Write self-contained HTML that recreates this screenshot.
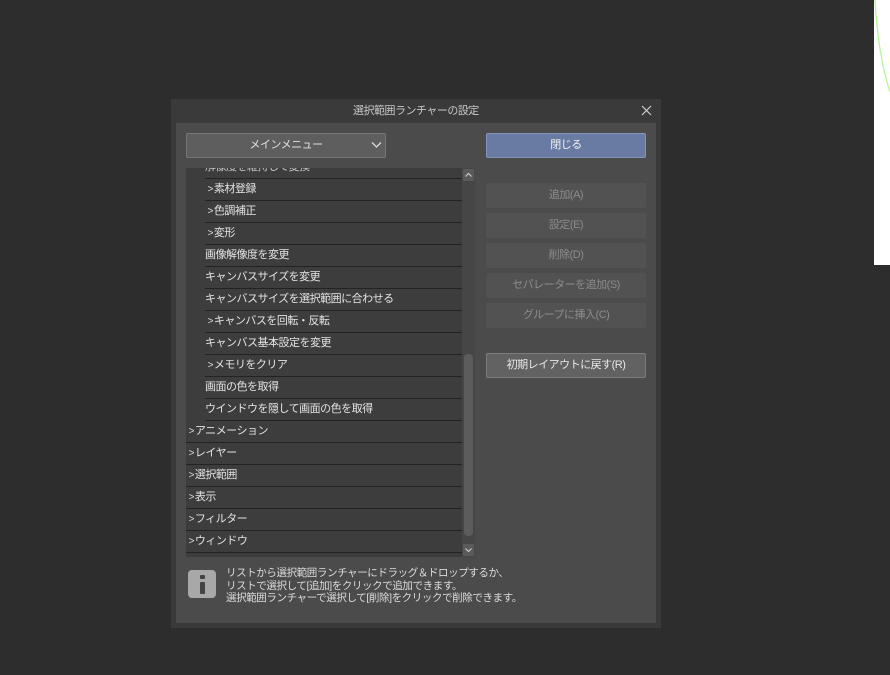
<!DOCTYPE html>
<html><head><meta charset="utf-8"><style>
*{margin:0;padding:0;box-sizing:border-box}
body{width:890px;height:675px;background:#2d2d2d;position:relative;overflow:hidden;font-family:"Liberation Sans","Noto Sans CJK JP",sans-serif;font-size:11px;letter-spacing:-0.5px;color:#e6e6e6}
.a{position:absolute}
.dlg{left:171px;top:99px;width:490px;height:529px;background:#3a3a3a}
.title{left:171px;top:99px;width:490px;height:24px;text-align:center;line-height:24px;color:#c8c8c8}
.inner{left:176px;top:123px;width:480px;height:500px;background:#4b4b4b}
.combo{left:186px;top:133px;width:200px;height:25px;background:#5e5e5e;border:1px solid #767676;border-radius:2px;text-align:center;line-height:23px;color:#e0e0e0}
.list{left:186px;top:168px;width:289px;height:389px;background:#3d3d3d;overflow:hidden}
.row{position:absolute;height:22px;line-height:21px;border-bottom:1px solid #232323;color:#e4e4e4;white-space:nowrap;width:276px}
.c{font-size:10px;margin-right:1px;color:#ddd}
.btn{left:486px;width:160px;height:25px;border-radius:2px;text-align:center;line-height:25px}
.dis{background:#525252;color:#8c8c8c}
</style></head><body>
<div class="a" style="left:874px;top:0;width:16px;height:265px;background:#fff"></div>
<svg class="a" style="left:870px;top:0" width="20" height="100"><path d="M5 0 Q8 55 20 92" stroke="#b6f59a" stroke-width="1.3" fill="none"/></svg>
<div class="a dlg"></div>
<div class="a title">選択範囲ランチャーの設定</div>
<svg class="a" style="left:641px;top:105px" width="11" height="11"><path d="M1 1 L10 10 M10 1 L1 10" stroke="#cfcfcf" stroke-width="1.2"/></svg>
<div class="a inner"></div>
<div class="a combo">メインメニュー</div>
<svg class="a" style="left:371px;top:141px" width="11" height="8"><path d="M1 1.5 L5.5 6 L10 1.5" stroke="#ddd" stroke-width="1.3" fill="none"/></svg>
<div class="a list">
<div class="row" style="left:19px;top:-11px;width:257px;color:#ccc">解像度を維持して変換</div>
<div class="row" style="left:19px;top:11px;width:257px">&nbsp;<span class="c">&gt;</span>素材登録</div>
<div class="row" style="left:19px;top:33px;width:257px">&nbsp;<span class="c">&gt;</span>色調補正</div>
<div class="row" style="left:19px;top:55px;width:257px">&nbsp;<span class="c">&gt;</span>変形</div>
<div class="row" style="left:19px;top:77px;width:257px">画像解像度を変更</div>
<div class="row" style="left:19px;top:99px;width:257px">キャンバスサイズを変更</div>
<div class="row" style="left:19px;top:121px;width:257px">キャンバスサイズを選択範囲に合わせる</div>
<div class="row" style="left:19px;top:143px;width:257px">&nbsp;<span class="c">&gt;</span>キャンバスを回転・反転</div>
<div class="row" style="left:19px;top:165px;width:257px">キャンバス基本設定を変更</div>
<div class="row" style="left:19px;top:187px;width:257px">&nbsp;<span class="c">&gt;</span>メモリをクリア</div>
<div class="row" style="left:19px;top:209px;width:257px">画面の色を取得</div>
<div class="row" style="left:19px;top:231px;width:257px">ウインドウを隠して画面の色を取得</div>
<div class="row" style="left:0;top:253px">&nbsp;<span class="c">&gt;</span>アニメーション</div>
<div class="row" style="left:0;top:275px">&nbsp;<span class="c">&gt;</span>レイヤー</div>
<div class="row" style="left:0;top:297px">&nbsp;<span class="c">&gt;</span>選択範囲</div>
<div class="row" style="left:0;top:319px">&nbsp;<span class="c">&gt;</span>表示</div>
<div class="row" style="left:0;top:341px">&nbsp;<span class="c">&gt;</span>フィルター</div>
<div class="row" style="left:0;top:363px">&nbsp;<span class="c">&gt;</span>ウィンドウ</div>
<div class="a" style="left:276px;top:0;width:13px;height:389px;background:#464646"></div>
<div class="a" style="left:277px;top:1px;width:11px;height:12px;background:#5a5a5a;border-radius:1px"></div>
<div class="a" style="left:277px;top:376px;width:11px;height:12px;background:#5a5a5a;border-radius:1px"></div>
<div class="a" style="left:278px;top:186px;width:9px;height:182px;background:#5c5c5c;border-radius:4px"></div>
<svg class="a" style="left:278px;top:3px" width="9" height="8"><path d="M1.5 5.5 L4.5 2.5 L7.5 5.5" stroke="#ccc" stroke-width="1.2" fill="none"/></svg>
<svg class="a" style="left:278px;top:378px" width="9" height="8"><path d="M1.5 2.5 L4.5 5.5 L7.5 2.5" stroke="#ccc" stroke-width="1.2" fill="none"/></svg>
</div>
<div class="a" style="left:188px;top:570px;width:28px;height:28px;background:#a8a8a8;border-radius:4px"></div>
<div class="a" style="left:200px;top:575px;width:5px;height:4px;background:#444;border-radius:1px"></div>
<div class="a" style="left:200px;top:582px;width:5px;height:12px;background:#444;border-radius:1px"></div>
<div class="a" style="left:226px;top:567px;line-height:12.5px;font-size:10.5px;letter-spacing:-0.4px;color:#dcdcdc">リストから選択範囲ランチャーにドラッグ＆ドロップするか、<br>リストで選択して[追加]をクリックで追加できます。<br>選択範囲ランチャーで選択して[削除]をクリックで削除できます。</div>
<div class="a btn" style="top:133px;background:#6a7ba3;border:1px solid #8294bb;color:#f0f0f0;line-height:23px">閉じる</div>
<div class="a btn dis" style="top:183px">追加(A)</div>
<div class="a btn dis" style="top:213px">設定(E)</div>
<div class="a btn dis" style="top:243px">削除(D)</div>
<div class="a btn dis" style="top:273px">セパレーターを追加(S)</div>
<div class="a btn dis" style="top:303px">グループに挿入(C)</div>
<div class="a btn" style="top:353px;background:#626262;border:1px solid #7c7c7c;color:#e8e8e8;line-height:23px">初期レイアウトに戻す(R)</div>
</body></html>
